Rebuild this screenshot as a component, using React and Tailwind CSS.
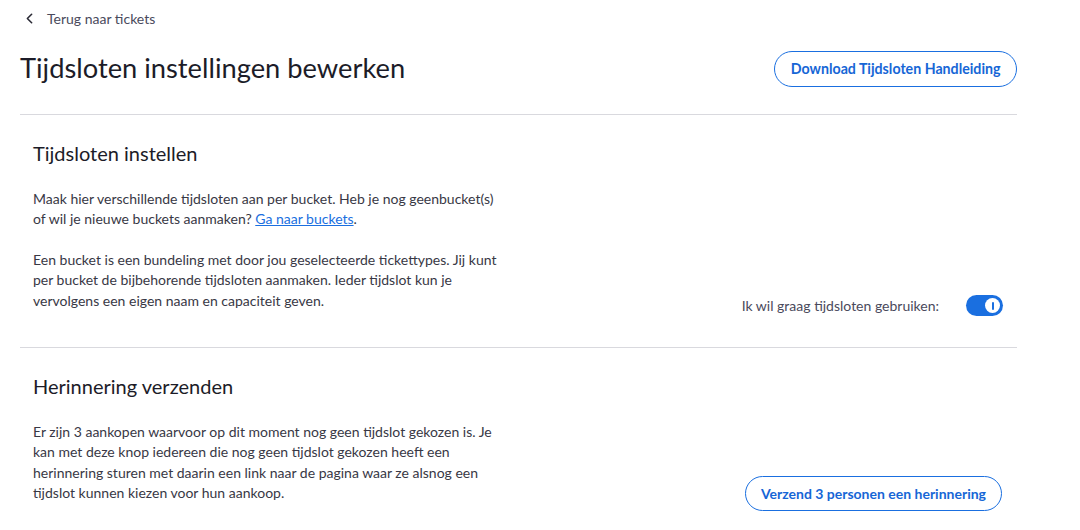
import { ChevronLeft } from 'lucide-react'

const font = { fontFamily: 'Lato, "Noto Sans", sans-serif' }

function Toggle() {
  return (
    <div className="w-[37px] h-[21px] rounded-full bg-[#1a6fe0] flex items-center justify-end pr-[3px]">
      <div className="w-[15px] h-[15px] rounded-full bg-white flex items-center justify-center">
        <div className="w-[2px] h-[8px] rounded-full bg-[#1a6fe0]" />
      </div>
    </div>
  )
}

export default function App() {
  return (
    <div className="bg-white min-h-[530px] px-5 text-[#383845]" style={font}>
      <div className="w-[997px]">
        {/* Back */}
        <div className="pt-2 h-7 flex items-center gap-[9px] pl-[1px] text-[14px] text-[#4a4a5c]">
          <ChevronLeft size={17} strokeWidth={2.25} className="text-[#2a2a35]" />
          <span>Terug naar tickets</span>
        </div>

        {/* Header */}
        <div className="mt-[23px] flex items-center justify-between">
          <h1 className="text-[27.3px] leading-none text-[#1c1c28] -mt-[2px]">Tijdsloten instellingen bewerken</h1>
          <button className="h-9 px-[15.5px] rounded-full border border-[#1a6fe0] text-[#1666d6] text-[14.2px] font-bold">
            Download Tijdsloten Handleiding
          </button>
        </div>

        <div className="mt-[27px] border-t border-[#d9d9de]" />

        {/* Tijdsloten instellen */}
        <section className="pl-[13px] pr-[14px] pt-[25px] pb-[36px]">
          <h2 className="text-[20px] leading-[26px] text-[#1c1c28]">Tijdsloten instellen</h2>
          <div className="mt-[23px] flex items-end justify-between">
            <div className="w-[470px] text-[14px] leading-[20.4px] flex flex-col gap-[20px]">
              <p>
                Maak hier verschillende tijdsloten aan per bucket. Heb je nog geenbucket(s) of wil je nieuwe buckets aanmaken?{' '}
                <a href="#" className="text-[#1a6fe0] underline">Ga naar buckets</a>.
              </p>
              <p>
                Een bucket is een bundeling met door jou geselecteerde tickettypes. Jij kunt per bucket de bijbehorende tijdsloten aanmaken. Ieder tijdslot kun je vervolgens een eigen naam en capaciteit geven.
              </p>
            </div>
            <div className="flex items-center gap-[27px] -mb-[5px]">
              <span className="text-[14px] text-[#4a4a5c]">Ik wil graag tijdsloten gebruiken:</span>
              <Toggle />
            </div>
          </div>
        </section>

        <div className="border-t border-[#d9d9de]" />

        {/* Herinnering verzenden */}
        <section className="pl-[13px] pr-[15px] pt-[25px]">
          <h2 className="text-[20px] leading-[26px] text-[#1c1c28]">Herinnering verzenden</h2>
          <div className="mt-[23px] flex items-end justify-between">
            <p className="w-[470px] text-[14px] leading-[20.4px]">
              Er zijn 3 aankopen waarvoor op dit moment nog geen tijdslot gekozen is. Je kan met deze knop iedereen die nog geen tijdslot gekozen heeft een herinnering sturen met daarin een link naar de pagina waar ze alsnog een tijdslot kunnen kiezen voor hun aankoop.
            </p>
            <button className="h-[35px] px-[15px] rounded-full border border-[#1a6fe0] text-[#1666d6] text-[14px] font-bold -mb-[7px]">
              Verzend 3 personen een herinnering
            </button>
          </div>
        </section>
      </div>
    </div>
  )
}
